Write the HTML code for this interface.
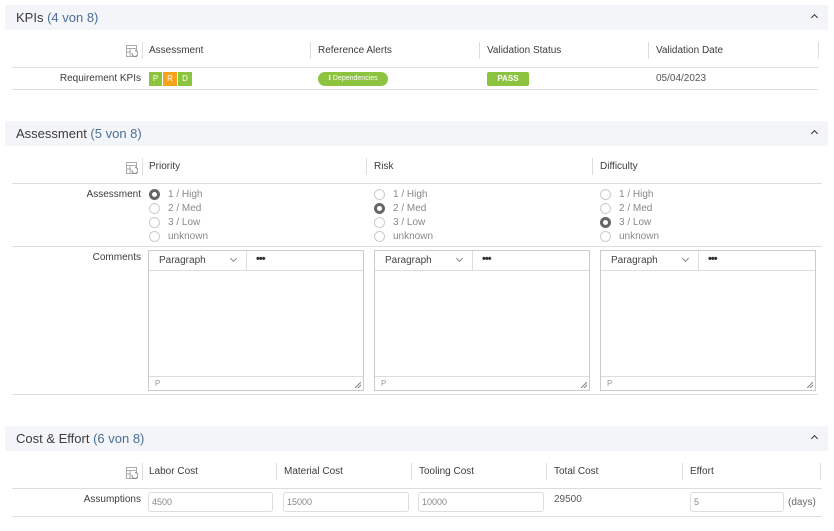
<!DOCTYPE html>
<html><head><meta charset="utf-8"><style>
*{margin:0;padding:0;box-sizing:border-box}
body{width:834px;height:531px;background:#fff;font-family:"Liberation Sans",sans-serif;color:#3c3c3c;position:relative;overflow:hidden;font-size:10px}
.a{position:absolute;white-space:nowrap}
.hdr{position:absolute;left:5px;width:823px;height:25px;background:#f4f5f8}
.hdr .t{position:absolute;left:11px;top:5px;font-size:13px;color:#3c3c3c}
.hdr .t span{color:#4a6f96}
.hdr .c{position:absolute;right:11px;top:10px;width:5px;height:5px;border-left:1.3px solid #333;border-top:1.3px solid #333;transform:rotate(45deg)}
.vl{position:absolute;width:1px;height:17px;background:#ddd}
.hl{position:absolute;height:1px;background:#ddd}
.ic{position:absolute;width:12px;height:12px}
.b{position:absolute;height:14px;color:#fff;font-size:8px;text-align:center;line-height:14px}
.r{position:absolute;width:11px;height:11px;border:1px solid #ccc;border-radius:50%}
.r.on{border:3px solid #666}
.rl{position:absolute;color:#888}
.ed{position:absolute;width:216px;height:141px;border:1px solid #ccc}
.ed .tb{position:absolute;left:0;top:0;right:0;height:20px;border-bottom:1px solid #ddd}
.ed .p{position:absolute;left:10px;top:4px;color:#444}
.ed .v{position:absolute;left:82px;top:5px;width:5px;height:5px;border-right:1px solid #888;border-bottom:1px solid #888;transform:rotate(45deg)}
.ed .d{position:absolute;left:97px;top:0;width:1px;height:20px;background:#ddd}
.ed .dots{position:absolute;left:107px;top:2px;font-weight:bold;color:#333;font-size:11px;letter-spacing:-1px}
.ed .ft{position:absolute;left:0;right:0;bottom:0;height:14px;border-top:1px solid #ddd;color:#999;font-size:8px;padding-left:6px;line-height:13px}
.ed .rs{position:absolute;right:2px;bottom:2px;width:6px;height:6px;background:linear-gradient(135deg,transparent 45%,#888 45%,#888 55%,transparent 55%,transparent 70%,#888 70%,#888 80%,transparent 80%)}
.in{position:absolute;height:20px;border:1px solid #ddd;border-radius:3px;color:#888;font-size:9px;padding-left:3px;line-height:18px}
</style></head><body>
<svg width="0" height="0" style="position:absolute"><defs><g id="ico"><rect x="0.5" y="0.5" width="10" height="11" fill="none" stroke="#aaa"/><line x1="0.5" y1="3.5" x2="10.5" y2="3.5" stroke="#aaa"/><line x1="0.5" y1="7" x2="5" y2="7" stroke="#aaa"/><line x1="4" y1="3.5" x2="4" y2="11.5" stroke="#aaa"/><path d="M6 8 a3 3 0 1 0 3 -2.5" fill="#fff" stroke="#888"/></g></defs></svg>

<div class="hdr" style="top:5px"><div class="t">KPIs <span>(4 von 8)</span></div><div class="c"></div></div>
<svg class="ic" style="left:126px;top:45px"><use href="#ico"/></svg>
<div class="vl" style="left:142px;top:42px"></div>
<div class="a" style="left:149px;top:45px">Assessment</div>
<div class="vl" style="left:310px;top:42px"></div>
<div class="a" style="left:318px;top:45px">Reference Alerts</div>
<div class="vl" style="left:479px;top:42px"></div>
<div class="a" style="left:487px;top:45px">Validation Status</div>
<div class="vl" style="left:648px;top:42px"></div>
<div class="a" style="left:656px;top:45px">Validation Date</div>
<div class="vl" style="left:818px;top:42px"></div>
<div class="hl" style="left:12px;width:806px;top:67px"></div>
<div class="a" style="left:40px;width:101px;text-align:right;top:73px">Requirement KPIs</div>
<div class="b" style="left:149px;top:72px;width:13px;background:#8cc43f">P</div>
<div class="b" style="left:163px;top:72px;width:14px;background:#f7a21b">R</div>
<div class="b" style="left:178px;top:72px;width:14px;background:#8cc43f">D</div>
<div class="b" style="left:318px;top:72px;width:70px;background:#8cc43f;border-radius:7px;font-size:7px">ℹ Dependencies</div>
<div class="b" style="left:487px;top:72px;width:42px;background:#8cc43f;border-radius:2px;font-weight:bold">PASS</div>
<div class="a" style="left:656px;top:73px;color:#555">05/04/2023</div>
<div class="hl" style="left:12px;width:806px;top:89px"></div>

<div class="hdr" style="top:121px"><div class="t">Assessment <span>(5 von 8)</span></div><div class="c"></div></div>
<svg class="ic" style="left:126px;top:162px"><use href="#ico"/></svg>
<div class="vl" style="left:142px;top:158px"></div>
<div class="a" style="left:149px;top:161px">Priority</div>
<div class="vl" style="left:366px;top:158px"></div>
<div class="a" style="left:374px;top:161px">Risk</div>
<div class="vl" style="left:592px;top:158px"></div>
<div class="a" style="left:600px;top:161px">Difficulty</div>
<div class="hl" style="left:12px;width:810px;top:183px"></div>
<div class="a" style="left:40px;width:101px;text-align:right;top:189px">Assessment</div>

<div class="r on" style="left:149px;top:189px"></div><div class="rl" style="left:168px;top:189px">1 / High</div>
<div class="r" style="left:149px;top:203px"></div><div class="rl" style="left:168px;top:203px">2 / Med</div>
<div class="r" style="left:149px;top:217px"></div><div class="rl" style="left:168px;top:217px">3 / Low</div>
<div class="r" style="left:149px;top:231px"></div><div class="rl" style="left:168px;top:231px">unknown</div>

<div class="r" style="left:374px;top:189px"></div><div class="rl" style="left:393px;top:189px">1 / High</div>
<div class="r on" style="left:374px;top:203px"></div><div class="rl" style="left:393px;top:203px">2 / Med</div>
<div class="r" style="left:374px;top:217px"></div><div class="rl" style="left:393px;top:217px">3 / Low</div>
<div class="r" style="left:374px;top:231px"></div><div class="rl" style="left:393px;top:231px">unknown</div>

<div class="r" style="left:600px;top:189px"></div><div class="rl" style="left:619px;top:189px">1 / High</div>
<div class="r" style="left:600px;top:203px"></div><div class="rl" style="left:619px;top:203px">2 / Med</div>
<div class="r on" style="left:600px;top:217px"></div><div class="rl" style="left:619px;top:217px">3 / Low</div>
<div class="r" style="left:600px;top:231px"></div><div class="rl" style="left:619px;top:231px">unknown</div>
<div class="hl" style="left:12px;width:810px;top:246px"></div>
<div class="a" style="left:40px;width:101px;text-align:right;top:252px">Comments</div>

<div class="ed" style="left:148px;top:250px"><div class="tb"><div class="p">Paragraph</div><div class="v"></div><div class="d"></div><div class="dots">•••</div></div><div class="ft">P</div><div class="rs"></div></div>
<div class="ed" style="left:374px;top:250px"><div class="tb"><div class="p">Paragraph</div><div class="v"></div><div class="d"></div><div class="dots">•••</div></div><div class="ft">P</div><div class="rs"></div></div>
<div class="ed" style="left:600px;top:250px"><div class="tb"><div class="p">Paragraph</div><div class="v"></div><div class="d"></div><div class="dots">•••</div></div><div class="ft">P</div><div class="rs"></div></div>
<div class="hl" style="left:12px;width:806px;top:394px"></div>

<div class="hdr" style="top:426px"><div class="t">Cost &amp; Effort <span>(6 von 8)</span></div><div class="c"></div></div>
<svg class="ic" style="left:126px;top:467px"><use href="#ico"/></svg>
<div class="vl" style="left:142px;top:463px"></div>
<div class="a" style="left:149px;top:466px">Labor Cost</div>
<div class="vl" style="left:276px;top:463px"></div>
<div class="a" style="left:284px;top:466px">Material Cost</div>
<div class="vl" style="left:411px;top:463px"></div>
<div class="a" style="left:419px;top:466px">Tooling Cost</div>
<div class="vl" style="left:546px;top:463px"></div>
<div class="a" style="left:554px;top:466px">Total Cost</div>
<div class="vl" style="left:682px;top:463px"></div>
<div class="a" style="left:690px;top:466px">Effort</div>
<div class="vl" style="left:820px;top:463px"></div>
<div class="hl" style="left:12px;width:810px;top:488px"></div>
<div class="a" style="left:40px;width:101px;text-align:right;top:494px">Assumptions</div>
<div class="in" style="left:148px;top:492px;width:125px">4500</div>
<div class="in" style="left:283px;top:492px;width:126px">15000</div>
<div class="in" style="left:418px;top:492px;width:126px">10000</div>
<div class="a" style="left:554px;top:494px;color:#555">29500</div>
<div class="in" style="left:690px;top:492px;width:94px">5</div>
<div class="a" style="left:788px;top:497px;color:#666">(days)</div>
<div class="hl" style="left:12px;width:810px;top:516px"></div>
</body></html>
